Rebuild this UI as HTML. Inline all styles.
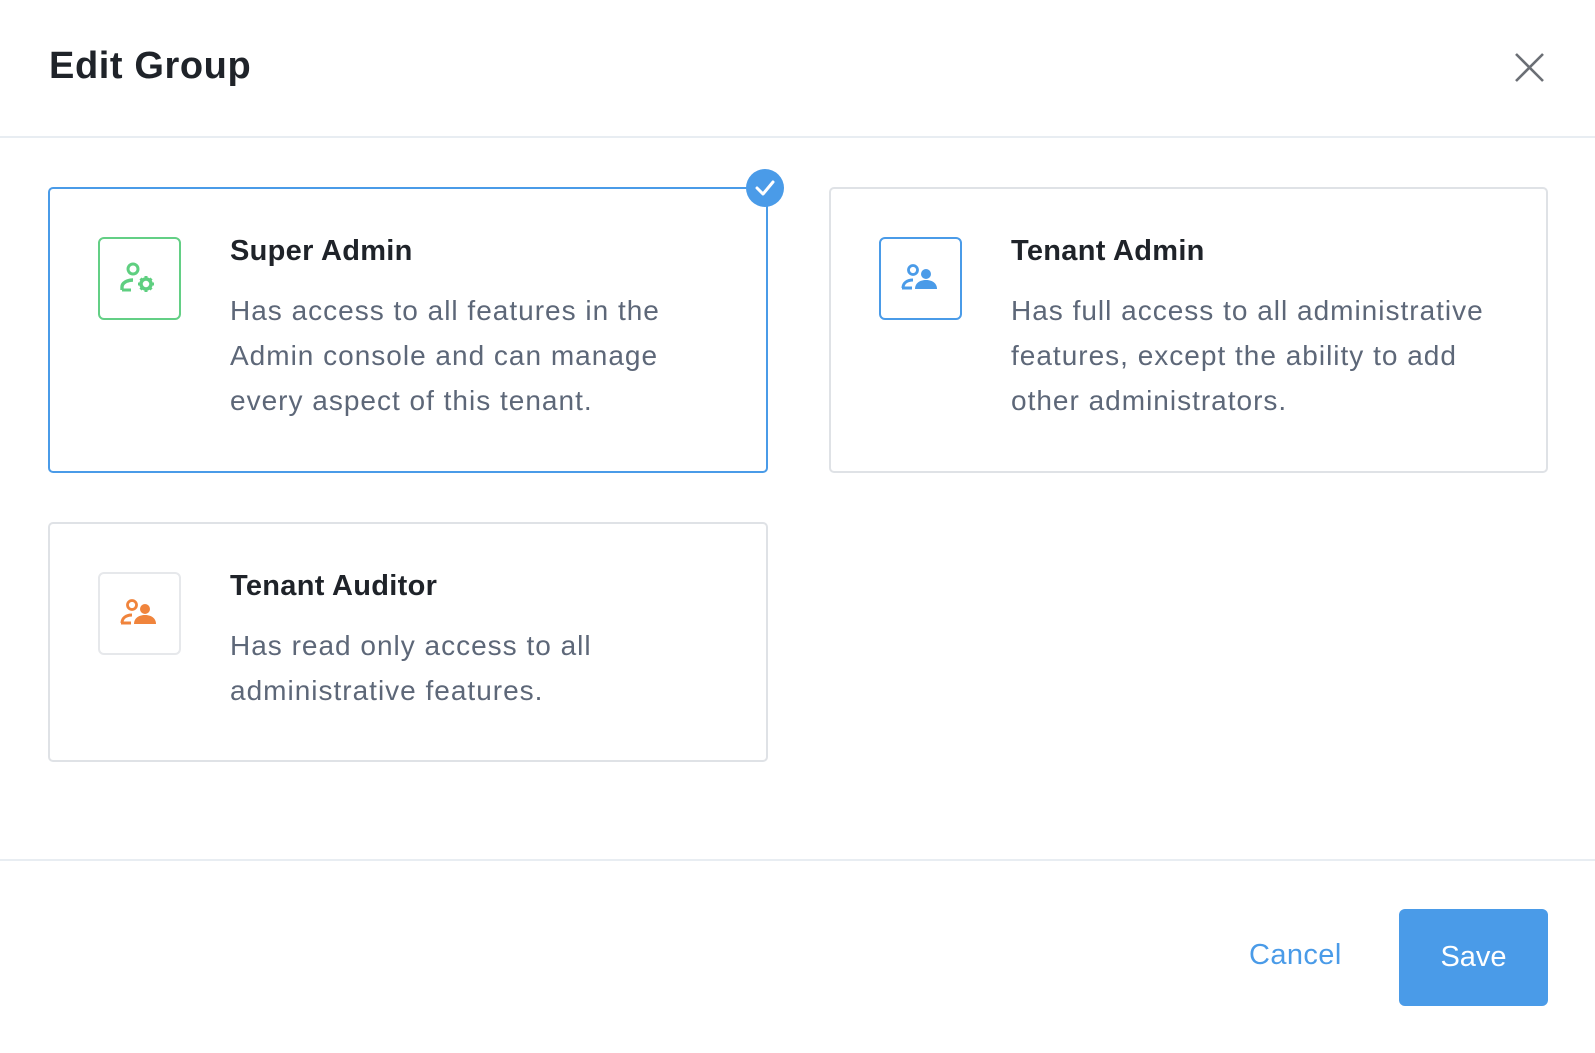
<!DOCTYPE html>
<html><head><meta charset="utf-8"><style>
*{margin:0;padding:0;box-sizing:border-box}
body{width:1595px;height:1053px;background:#fff;font-family:"Liberation Sans",sans-serif;position:relative;overflow:hidden}
.abs{position:absolute}
.h{left:49px;top:45px;font-size:38px;font-weight:600;color:#1f2329;letter-spacing:0.6px}
.line{left:0;width:1595px;height:2px;background:#e8edf2}
.card{position:absolute;border:2px solid #dfe2e6;border-radius:5px;background:#fff}
.sel{border-color:#4a9be8}
.ib{position:absolute;left:48px;top:48px;width:83px;height:83px;border:2px solid #ddd;border-radius:6px;display:flex;align-items:center;justify-content:center}
.t{position:absolute;left:180px;top:46px;font-size:29px;font-weight:600;color:#1f2329;letter-spacing:0.3px}
.d{position:absolute;left:180px;top:99px;font-size:28px;line-height:45px;color:#5d6778;width:540px;white-space:nowrap;letter-spacing:1px}
</style></head><body>
<div class="abs h">Edit Group</div>
<svg class="abs" style="left:1514px;top:52px" width="31" height="31" viewBox="0 0 31 31"><path d="M2 2L29 29M29 2L2 29" stroke="#6b6f75" stroke-width="2.6"/></svg>
<div class="abs line" style="top:136px"></div>

<div class="card sel" style="left:48px;top:187px;width:720px;height:286px">
 <div class="ib" style="border-color:#63cf85"><svg width="44" height="36" viewBox="0 0 44 36"><circle cx="15" cy="8" r="5" fill="none" stroke="#5fcf80" stroke-width="3"/><path d="M4 29v-3c0-4 5-7 11-7" fill="none" stroke="#5fcf80" stroke-width="3.4"/><path d="M4 29h9" stroke="#5fcf80" stroke-width="3"/><circle cx="28" cy="23" r="5" fill="none" stroke="#5fcf80" stroke-width="3.5"/><g stroke="#5fcf80" stroke-width="3"><path d="M28 15v3M28 28v3M20 23h3M33 23h3M22.5 17.5l2 2M31.5 26.5l2 2M22.5 28.5l2-2M31.5 19.5l2-2"/></g></svg></div>
 <div class="t">Super Admin</div>
 <div class="d">Has access to all features in the<br>Admin console and can manage<br>every aspect of this tenant.</div>
</div>
<svg class="abs" style="left:746px;top:169px" width="38" height="38"><circle cx="19" cy="19" r="19" fill="#4a9be8"/><path d="M11 19l6 6 10-12" fill="none" stroke="#fff" stroke-width="3" stroke-linecap="round" stroke-linejoin="round"/></svg>

<div class="card" style="left:829px;top:187px;width:719px;height:286px">
 <div class="ib" style="border-color:#4a9be8"><svg width="44" height="36" viewBox="0 0 44 36"><circle cx="14" cy="9" r="4.5" fill="none" stroke="#4a9be8" stroke-width="2.8"/><path d="M4 27c0-5 4-8 10-8" fill="none" stroke="#4a9be8" stroke-width="3"/><path d="M3 27h10" stroke="#4a9be8" stroke-width="3"/><circle cx="27" cy="13" r="5" fill="#4a9be8"/><path d="M16 28c0-6 5-9 11-9s11 3 11 9z" fill="#4a9be8"/></svg></div>
 <div class="t">Tenant Admin</div>
 <div class="d">Has full access to all administrative<br>features, except the ability to add<br>other administrators.</div>
</div>

<div class="card" style="left:48px;top:522px;width:720px;height:240px">
 <div class="ib" style="border-color:#e6e8eb"><svg width="44" height="36" viewBox="0 0 44 36"><circle cx="14" cy="9" r="4.5" fill="none" stroke="#f0843c" stroke-width="2.8"/><path d="M4 27c0-5 4-8 10-8" fill="none" stroke="#f0843c" stroke-width="3"/><path d="M3 27h10" stroke="#f0843c" stroke-width="3"/><circle cx="27" cy="13" r="5" fill="#f0843c"/><path d="M16 28c0-6 5-9 11-9s11 3 11 9z" fill="#f0843c"/></svg></div>
 <div class="t">Tenant Auditor</div>
 <div class="d">Has read only access to all<br>administrative features.</div>
</div>

<div class="abs line" style="top:859px"></div>
<div class="abs" style="left:1249px;top:939px;font-size:29px;color:#4a9be8;letter-spacing:0.4px">Cancel</div>
<div class="abs" style="left:1399px;top:909px;width:149px;height:97px;background:#4a9be8;border-radius:6px;color:#fff;font-size:29px;display:flex;align-items:center;justify-content:center">Save</div>
</body></html>
